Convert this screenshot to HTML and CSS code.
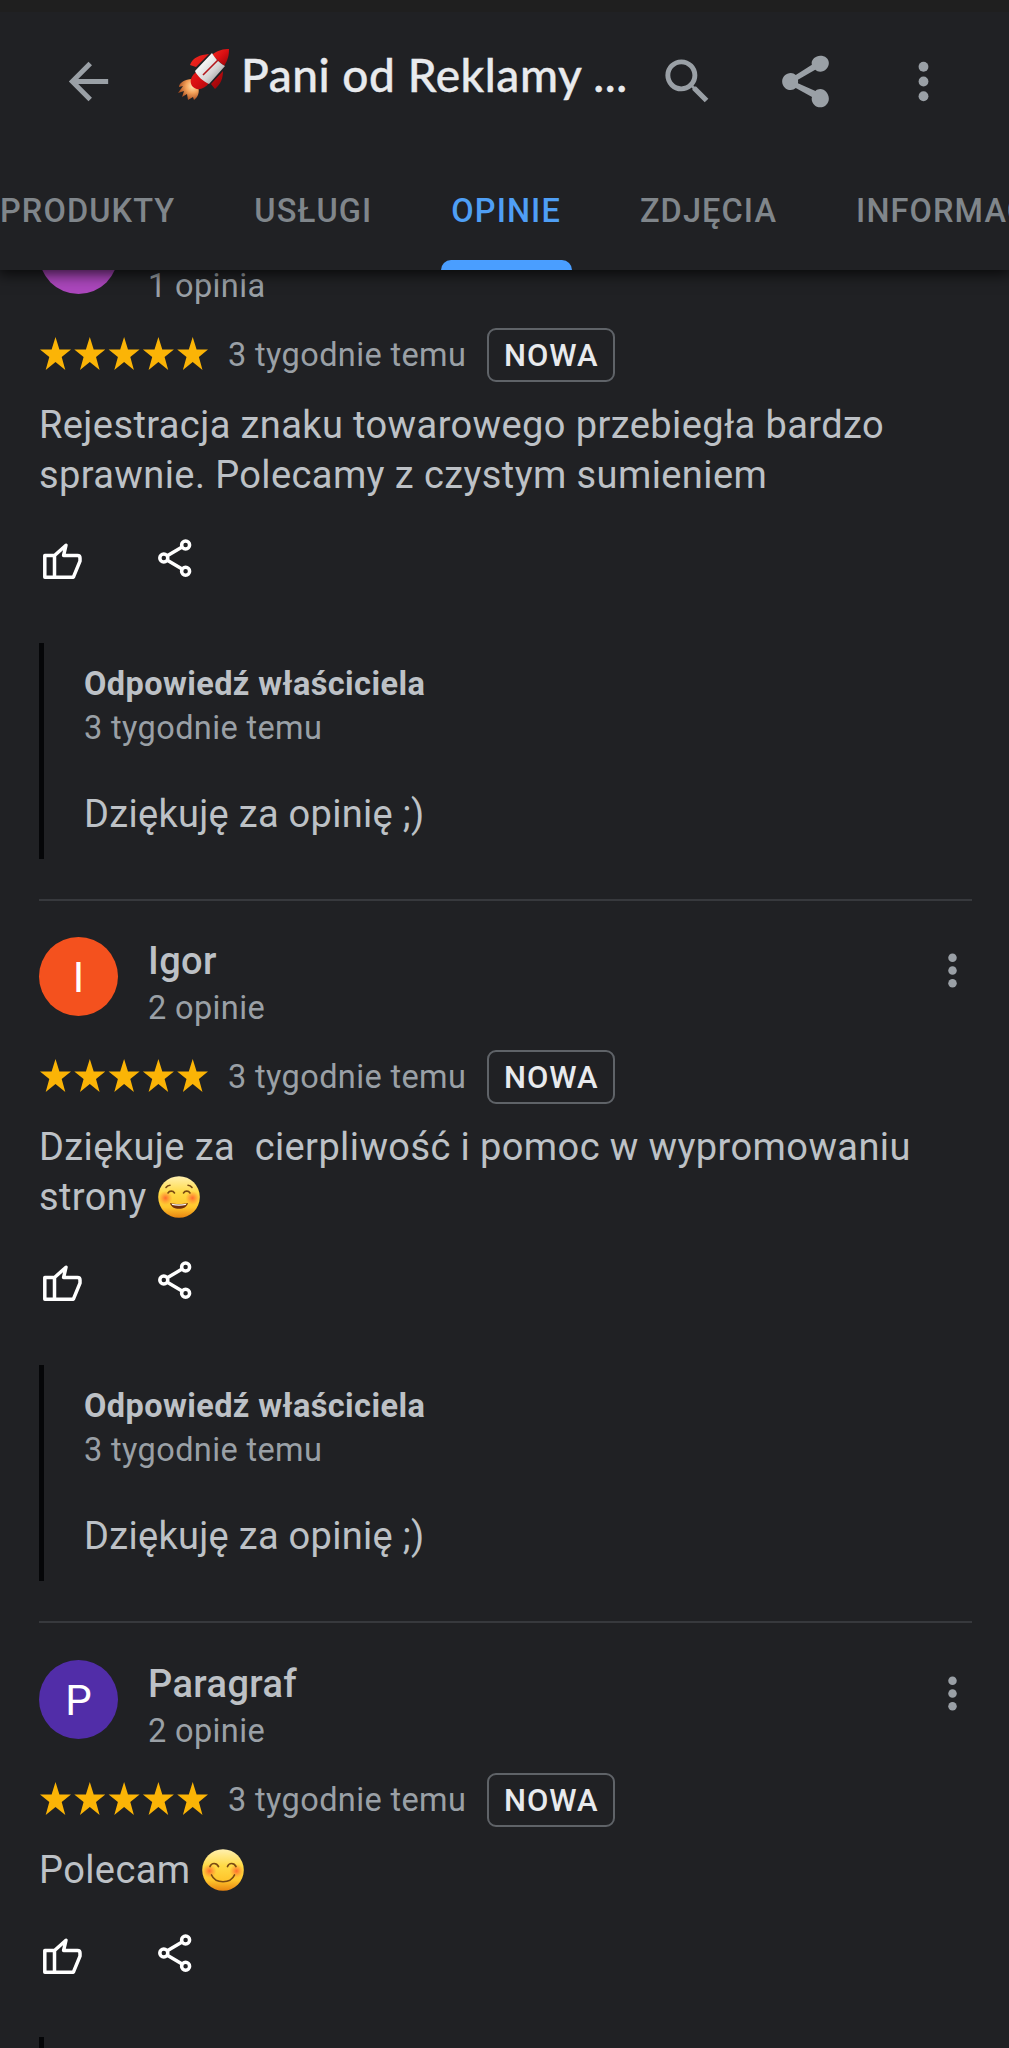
FILE: index.html
```html
<!DOCTYPE html>
<html lang="pl">
<head>
<meta charset="utf-8">
<title>Opinie</title>
<link rel="stylesheet" href="styles.css">
</head>
<body>
<svg class="defs" width="0" height="0" aria-hidden="true">
  <defs>
    <linearGradient id="hull" x1="0" y1="0" x2="1" y2="1"><stop offset="0.2" stop-color="#fff"/><stop offset="0.6" stop-color="#d5d3d3"/><stop offset="1" stop-color="#777"/></linearGradient>
    <linearGradient id="red" x1="0" y1="0" x2="1" y2="1"><stop offset="0" stop-color="#ef2b20"/><stop offset="0.5" stop-color="#d90e12"/><stop offset="1" stop-color="#8d0508"/></linearGradient>
    <radialGradient id="flame" cx="0.7" cy="0.35" r="0.7"><stop offset="0" stop-color="#ffe3b0"/><stop offset="0.45" stop-color="#f5a35a"/><stop offset="1" stop-color="#a5491c"/></radialGradient>
    <linearGradient id="face" x1="0" y1="0" x2="0" y2="1"><stop offset="0" stop-color="#fff0b0"/><stop offset="0.4" stop-color="#ffda45"/><stop offset="0.75" stop-color="#ffc52c"/><stop offset="1" stop-color="#e88410"/></linearGradient>
    <radialGradient id="cheek"><stop offset="0" stop-color="#ff5a2c" stop-opacity="0.85"/><stop offset="1" stop-color="#ff7a2c" stop-opacity="0"/></radialGradient>
    <symbol id="more" viewBox="0 0 24 24"><circle cx="12" cy="6" r="2"/><circle cx="12" cy="12" r="2"/><circle cx="12" cy="18" r="2"/></symbol>
    <symbol id="stars" viewBox="0 0 168 34">
      <path id="star" d="M15.5 0l3.9 12.4H31l-9.3 7.6 3.6 12.9-9.8-7.8-9.8 7.8L9.3 20 0 12.4h11.6z"/>
      <use href="#star" x="34.3"/><use href="#star" x="68.6"/><use href="#star" x="102.9"/><use href="#star" x="137.2"/>
    </symbol>
    <symbol id="thumb" viewBox="0 0 40 38"><path fill="none" stroke="currentColor" stroke-width="3.5" stroke-linejoin="round" d="M11.500 13.500H1.800V35.200h28.600l6.600-16v-3.200q0-2.500-2.500-2.500H20.600l2.400-10.300zM11.500 13.500V35.200"/></symbol>
    <symbol id="share" viewBox="0 0 34 38"><g fill="none" stroke="currentColor" stroke-width="3.500"><circle cx="27.600" cy="6" r="4"/><circle cx="5.800" cy="19" r="4"/><circle cx="27.600" cy="32.200" r="4"/><path d="M9.300 16.800L24.100 8.100M9.300 21.200l14.800 8.900"/></g></symbol>
  </defs>
</svg>

<header class="topbar">
  <div class="appbar">
    <svg class="icon back" viewBox="0 0 24 24"><path d="M20 11H7.83l5.59-5.59L12 4l-8 8 8 8 1.41-1.41L7.83 13H20v-2z"/></svg>
    <h1 class="title">
      <svg class="rocket" viewBox="0 0 52 52">
        <path fill="url(#flame)" d="M14 30C7 30 1 34 1 38l4-1-5 7 6-2-2 6 5-3 1 6 5-3 1 3c4-3 6-8 4-13z"/>
        <path fill="url(#red)" d="M31 5C22 6 15 8 12 16l6 2zM45 22c0 7-2 13-8 18l-4-5zM20 22c-7 4-9 10-6 15 4 5 12 4 17-3z"/>
        <path fill="url(#red)" d="M34 6C39 1 46 0 51 0c0 6-1 11-5 17z"/>
        <path fill="url(#hull)" d="M34 4c2 4 7 10 13 13L31 35c-5-2-12-8-14-13z"/>
        <path stroke="#b3161b" stroke-width="1.6" d="M25 26L40 11"/>
      </svg>
      <span class="title-text">Pani od Reklamy ...</span>
    </h1>
    <div class="actions">
      <svg class="icon" viewBox="0 0 24 24"><path d="M15.5 14h-.79l-.28-.27A6.471 6.471 0 0 0 16 9.5 6.5 6.5 0 1 0 9.5 16c1.61 0 3.09-.59 4.23-1.57l.27.28v.79l5 4.99L20.49 19l-4.99-5zm-6 0C7.01 14 5 11.99 5 9.5S7.01 5 9.5 5 14 7.01 14 9.5 11.99 14 9.5 14z"/></svg>
      <svg class="icon" viewBox="0 0 24 24"><path d="M18 15.080c-.76 0-1.440.300-1.960.770L8.910 12.700c.05-.23.09-.46.09-.7s-.04-.47-.09-.7l7.050-4.110c.54.5 1.250.810 2.040.810 1.930 0 3.500-1.570 3.500-3.500S19.930 1.500 18 1.500s-3.500 1.570-3.500 3c0 .24.04.47.09.7L8.040 9.310C7.500 8.810 6.790 8.500 6 8.500c-1.930 0-3.500 1.570-3.500 3.500s1.570 3.500 3.500 3.500c.79 0 1.500-.31 2.040-.81l6.620 3.660c-.05.21-.16.43-.16.650 0 1.930 1.570 3.500 3.500 3.500s3.500-1.570 3.500-3.500-1.570-3.920-3.500-3.920z"/></svg>
      <svg class="icon"><use href="#more"/></svg>
    </div>
  </div>
  <nav class="tabs">
    <span class="tab">PRODUKTY</span>
    <span class="tab">USŁUGI</span>
    <span class="tab active">OPINIE</span>
    <span class="tab">ZDJĘCIA</span>
    <span class="tab">INFORMACJE</span>
  </nav>
</header>

<main class="reviews">
  <article class="review">
    <div class="author">
      <div class="avatar purple"></div>
      <div class="who"><div class="name">&nbsp;</div><div class="meta">1 opinia</div></div>
    </div>
    <div class="rating"><svg class="stars"><use href="#stars"/></svg><span class="meta">3 tygodnie temu</span><span class="badge">NOWA</span></div>
    <p class="text">Rejestracja znaku towarowego przebiegła bardzo<br>sprawnie. Polecamy z czystym sumieniem</p>
    <div class="buttons"><svg class="thumb"><use href="#thumb"/></svg><svg class="share"><use href="#share"/></svg></div>
    <div class="reply"><div class="reply-title">Odpowiedź właściciela</div><div class="meta">3 tygodnie temu</div><p class="reply-text">Dziękuję za opinię ;)</p></div>
  </article>

  <article class="review">
    <div class="author">
      <div class="avatar orange">I</div>
      <div class="who"><div class="name">Igor</div><div class="meta">2 opinie</div></div>
      <svg class="more"><use href="#more"/></svg>
    </div>
    <div class="rating"><svg class="stars"><use href="#stars"/></svg><span class="meta">3 tygodnie temu</span><span class="badge">NOWA</span></div>
    <p class="text">Dziękuje za&nbsp; cierpliwość i pomoc w wypromowaniu<br>strony <svg class="emoji" viewBox="0 0 42 42"><circle cx="21" cy="21" r="20.800" fill="url(#face)"/><circle cx="7.500" cy="22" r="7" fill="url(#cheek)"/><circle cx="34.500" cy="22" r="7" fill="url(#cheek)"/><path fill="none" stroke="#7a4a12" stroke-width="1.600" stroke-linecap="round" d="M10 17c1.500-2.500 5-2.500 6.500 0M25.500 17c1.500-2.500 5-2.500 6.500 0M8 11.500c1-1.500 2.500-2.300 4-2.300M34 11.500c-1-1.500-2.500-2.300-4-2.300"/><path fill="#70300c" d="M12 27c5 1.500 13 1.500 18 0-1 4-4.500 5.800-9 5.800S13 31 12 27z"/><path fill="#fff" d="M13.500 27.800c4.500 1 10.500 1 15 0l-.8 1.300c-4 1-9.500 1-13.400 0z"/></svg></p>
    <div class="buttons"><svg class="thumb"><use href="#thumb"/></svg><svg class="share"><use href="#share"/></svg></div>
    <div class="reply"><div class="reply-title">Odpowiedź właściciela</div><div class="meta">3 tygodnie temu</div><p class="reply-text">Dziękuję za opinię ;)</p></div>
  </article>

  <article class="review">
    <div class="author">
      <div class="avatar violet">P</div>
      <div class="who"><div class="name">Paragraf</div><div class="meta">2 opinie</div></div>
      <svg class="more"><use href="#more"/></svg>
    </div>
    <div class="rating"><svg class="stars"><use href="#stars"/></svg><span class="meta">3 tygodnie temu</span><span class="badge">NOWA</span></div>
    <p class="text">Polecam <svg class="emoji" viewBox="0 0 42 42"><circle cx="21" cy="21" r="20.800" fill="url(#face)"/><circle cx="7.500" cy="22" r="7" fill="url(#cheek)"/><circle cx="34.500" cy="22" r="7" fill="url(#cheek)"/><path fill="none" stroke="#7a4a12" stroke-width="1.700" stroke-linecap="round" d="M8 17.500c1.500-4 6.500-4 8.500 0M25.500 17.500c1.500-4 6.500-4 8.500 0M9.500 26c4 9 19 9 23 0"/></svg></p>
    <div class="buttons"><svg class="thumb"><use href="#thumb"/></svg><svg class="share"><use href="#share"/></svg></div>
    <div class="reply empty"></div>
  </article>
</main>
</body>
</html>
```

FILE: styles.css
```css
* { box-sizing: border-box; }

body {
  margin: 0;
  background: #202124;
  color: #bdc1c6;
  font-family: Roboto, sans-serif;
}

svg { display: block; flex: none; }
.defs { position: absolute; }

.topbar {
  position: relative;
  z-index: 1;
  height: 270px;
  background: #202124;
  border-top: 12px solid #1f1f1f;
  box-shadow: 0 2px 14px 2px rgba(0, 0, 0, 0.75);
}

.appbar {
  display: flex;
  align-items: center;
  height: 138px;
  padding: 0 56px 0 59px;
}

.icon { width: 59px; height: 59px; fill: #9aa0a6; }

.title {
  display: flex;
  align-items: center;
  gap: 11px;
  margin: 0 0 13px 60px;
  color: #e8eaed;
  font-family: Lato, sans-serif;
  font-size: 46px;
  font-weight: 500;
  letter-spacing: 0.55px;
  line-height: 60px;
  white-space: nowrap;
  -webkit-text-stroke: 0.4px #e8eaed;
}

.rocket { width: 52px; height: 52px; }

.actions { display: flex; gap: 59px; margin-left: auto; }

.tabs {
  display: flex;
  gap: 79px;
  height: 120px;
  overflow: hidden;
}

.tab {
  position: relative;
  flex: none;
  height: 120px;
  color: #80868b;
  font-size: 32.5px;
  font-weight: 500;
  letter-spacing: 1.1px;
  line-height: 122px;
}

.tab.active { color: #4f9ff5; }

.tab.active::after {
  content: "";
  position: absolute;
  bottom: 0;
  left: -10px;
  right: -11px;
  height: 10px;
  border-radius: 10px 10px 0 0;
  background: #4a9eff;
}

.reviews { margin: -91px 37px 0 39px; }

.review { padding: 36px 0 40px; }
.review:last-child { padding: 37px 0 0; }
.review + .review { border-top: 2px solid #37393d; }

.author { display: flex; height: 94px; }

.avatar {
  width: 79px;
  height: 79px;
  border-radius: 50%;
  color: #fff;
  font-size: 42px;
  line-height: 81px;
  text-align: center;
}

.purple { background: #ab47bc; }
.orange { background: #f4511e; }
.violet { background: #512da8; }

.who { margin-left: 30px; }
.name { font-size: 38px; font-weight: 500; letter-spacing: 0.4px; line-height: 49px; height: 48px; }
.meta { color: #9aa0a6; font-size: 32.5px; letter-spacing: 0.37px; line-height: 44px; }
.who .meta { line-height: 46px; }

.more { width: 51px; height: 51px; margin: 8px -6px 0 auto; fill: #9aa0a6; }

.rating { display: flex; align-items: center; height: 54px; margin-top: 19px; }
.stars { width: 168px; height: 34px; margin: -3px 0 0 1px; fill: #fbb406; }
.rating .meta { margin-left: 20px; }

.badge {
  width: 128px;
  height: 54px;
  margin-left: 21px;
  border: 2px solid #5f6368;
  border-radius: 9px;
  color: #e8eaed;
  font-size: 31px;
  font-weight: 500;
  letter-spacing: 1px;
  line-height: 51px;
  text-align: center;
}

.text { margin: 18px 0 0; font-size: 38px; letter-spacing: 0.4px; line-height: 50px; white-space: nowrap; }
.emoji { display: inline-block; width: 42px; height: 42px; vertical-align: 2px; margin: -10px 0 -10px 2px; }

.buttons { display: flex; height: 44px; margin-top: 38px; }
.thumb { width: 40px; height: 38px; margin: 4px 0 0 4px; color: #fff; }
.share { width: 34px; height: 38px; margin: 1px 0 0 75px; color: #fff; }

.reply {
  height: 216px;
  margin-top: 61px;
  padding: 19px 0 0 40px;
  border-left: 5px solid #050608;
}

.reply.empty { height: 11px; margin-top: 60px; padding: 0; }

.reply-title { font-size: 32.5px; font-weight: 700; letter-spacing: 0.4px; line-height: 44px; }
.reply-text { margin: 39px 0 0; font-size: 38px; letter-spacing: 0.3px; line-height: 50px; }
```
